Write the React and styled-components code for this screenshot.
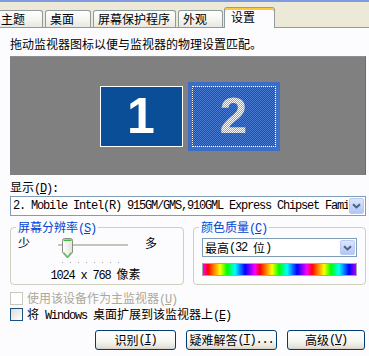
import React from "react";
import styled, { createGlobalStyle } from "styled-components";

const GlobalStyle = createGlobalStyle`
  html, body {
    margin: 0;
    width: 369px;
    height: 356px;
    overflow: hidden;
    background: #ECE9D8;
  }
  body {
    font-family: "Noto Sans CJK SC", "Liberation Sans", sans-serif;
    font-size: 12px;
    line-height: 14px;
    color: #000;
  }
`;

const Window = styled.div`
  width: 369px;
  height: 356px;
  display: flex;
  flex-direction: column;
  background: #ECE9D8;
  overflow: hidden;
`;

const TopStrip = styled.div`
  height: 2px;
  background: #7F9BE0;
`;

const TabBar = styled.div`
  height: 25px;
  display: flex;
  align-items: flex-end;
  margin-left: -4px;
  position: relative;
  z-index: 1;
`;

const Tab = styled.div`
  box-sizing: border-box;
  width: ${(p) => p.$w}px;
  height: ${(p) => (p.$active ? 21 : 17)}px;
  margin-right: ${(p) => (p.$gap === undefined ? 2 : p.$gap)}px;
  margin-bottom: ${(p) => (p.$active ? -1 : 0)}px;
  padding: ${(p) => (p.$active ? "2px 0 0 6px" : "1px 0 0 4px")};
  border: 1px solid #919B9C;
  border-bottom: none;
  border-top-color: ${(p) => (p.$active ? "#E68B2C" : "#919B9C")};
  border-radius: 3px 3px 0 0;
  background: ${(p) =>
    p.$active ? "#FCFCFE" : "linear-gradient(#FFFFFF, #F3F3EF 60%, #E8E7E0)"};
  box-shadow: ${(p) => (p.$active ? "inset 0 2px 0 #FFC73C" : "none")};
  white-space: nowrap;
`;

const Panel = styled.div`
  flex: 1;
  display: flex;
  flex-direction: column;
  background: #FCFCFE;
  border-top: 1px solid #919B9C;
  padding: 9px 3px 0 10px;
`;

const Hint = styled.div`
  line-height: 14px;
`;

const Preview = styled.div`
  box-sizing: border-box;
  margin-top: 5px;
  height: 119px;
  background: #808080;
  border-top: 1px solid #8E8E8E;
  border-right: 1px solid #6C6C6C;
  display: flex;
  align-items: center;
  justify-content: center;
  gap: 5px;
  padding-left: 4px;
`;

const Monitor = styled.div`
  box-sizing: border-box;
  width: 83px;
  height: 61px;
  border: 1px solid #FFFFFF;
  background: #0B4E98;
  color: #FFFFFF;
  font-family: "Liberation Sans", Arial, sans-serif;
  font-weight: bold;
  font-size: 50px;
  line-height: 1;
  display: grid;
  place-items: center;
`;

const SelectedMonitor = styled.div`
  box-sizing: border-box;
  width: 92px;
  height: 69px;
  border: 4px solid #3D6DC5;
  background: #3D6DC5;
`;

const DotFrame = styled.div`
  box-sizing: border-box;
  width: 100%;
  height: 100%;
  border: 1px dotted #FFFFFF;
  background: repeating-conic-gradient(#1452AA 0% 25%, #4A7CD2 0% 50%) 0 0 / 2px 2px;
  display: grid;
  place-items: center;
`;

const DitherDigit = styled.span`
  font-family: "Liberation Sans", Arial, sans-serif;
  font-weight: bold;
  font-size: 50px;
  line-height: 1;
  color: transparent;
  background: repeating-conic-gradient(#FFFFFF 0% 25%, #7FA2E0 0% 50%) 0 0 / 2px 2px;
  -webkit-background-clip: text;
  background-clip: text;
`;

const Label = styled.div`
  margin-top: 5px;
  line-height: 14px;
`;

const Lat = styled.span`
  display: inline-block;
  font-family: "Liberation Mono", "DejaVu Sans Mono", monospace;
  font-size: 12px;
  line-height: 10px;
  letter-spacing: -1.2px;
  white-space: pre;
  vertical-align: 0.5px;
`;

const Combo = styled.div`
  box-sizing: border-box;
  display: flex;
  align-items: stretch;
  height: ${(p) => p.$h}px;
  width: ${(p) => (p.$w ? `${p.$w}px` : "auto")};
  margin-top: ${(p) => p.$mt || 0}px;
  margin-left: ${(p) => p.$ml || 0}px;
  border: 1px solid #7F9DB9;
  background: #FFFFFF;
`;

const ComboText = styled.div`
  flex: 1;
  min-width: 0;
  overflow: hidden;
  white-space: nowrap;
  padding-left: ${(p) => p.$pl}px;
  display: flex;
  align-items: center;
`;

const DropButton = styled.div`
  box-sizing: border-box;
  width: 15px;
  margin: 1px;
  border: 1px solid #B9CBF3;
  border-radius: 2px;
  background: linear-gradient(#DCE6FD, #C2D3FA 55%, #B2C7F6);
  display: grid;
  place-items: center;
`;

const Groups = styled.div`
  margin-top: 4px;
  display: grid;
  grid-template-columns: 174px 173px;
  gap: 9px;
`;

const GroupBox = styled.fieldset`
  box-sizing: border-box;
  height: 65px;
  margin: 0;
  min-width: 0;
  padding: 0 8px 0 5px;
  border: 1px solid #D0D0BF;
  border-radius: 4px;
`;

const Legend = styled.legend`
  padding: 0 2px;
  color: #0046D5;
  line-height: 14px;
`;

const SliderRow = styled.div`
  display: flex;
  align-items: flex-start;
  margin: 2px 0 0 2px;
  line-height: 14px;
`;

const SliderArea = styled.div`
  width: 70px;
  margin: 0 17px 0 28px;
  display: flex;
  flex-direction: column;
`;

const TrackBox = styled.div`
  position: relative;
  height: 23px;
`;

const Track = styled.div`
  position: absolute;
  left: 0;
  right: 0;
  top: 8px;
  height: 2px;
  background: #C5C5BE;
  border-bottom: 1px solid #FFFFFF;
`;

const Thumb = styled.svg`
  position: absolute;
  left: 4px;
  top: 2px;
`;

const Ticks = styled.div`
  margin: 3px 0 0 4px;
  width: 64px;
  height: 1px;
  background: repeating-linear-gradient(to right, #A3A3A3 0 1px, transparent 1px 8px);
`;

const ResText = styled.div`
  margin-top: 4px;
  text-align: center;
  line-height: 14px;
`;

const Spectrum = styled.div`
  box-sizing: border-box;
  margin: 6px 0 0 3px;
  width: 155px;
  height: 13px;
  border: 1px solid #A7A6AA;
  background: repeating-linear-gradient(
    to right,
    #FF00FF 0px,
    #FF0000 5px,
    #FF8000 11px,
    #FFFF00 17px,
    #00FF00 24px,
    #00FFFF 32px,
    #0080FF 37px,
    #0000FF 42px,
    #8000FF 47px,
    #FF00FF 52px
  );
`;

const Checks = styled.div`
  margin-top: 5px;
  display: flex;
  flex-direction: column;
`;

const CheckRow = styled.div`
  height: 16px;
  display: flex;
  align-items: center;
  gap: 4px;
  line-height: 14px;
  color: ${(p) => (p.$disabled ? "#ACA899" : "#000")};
`;

const CheckText = styled.span`
  display: inline-block;
  height: 14px;
  line-height: 14px;
  white-space: nowrap;
`;

const CheckBox = styled.span`
  box-sizing: border-box;
  width: 13px;
  height: 13px;
  border: 1px solid ${(p) => (p.$disabled ? "#CAC8BB" : "#1C5180")};
  background: ${(p) =>
    p.$disabled ? "#FFFFFF" : "linear-gradient(135deg, #DCDCD7, #FFFFFF)"};
`;

const ButtonRow = styled.div`
  margin-top: 8px;
  display: flex;
  justify-content: flex-end;
  gap: 10px;
  padding-right: 1px;
`;

const XPButton = styled.div`
  box-sizing: border-box;
  width: ${(p) => p.$w}px;
  height: 20px;
  border: 1px solid #003C74;
  border-radius: 3px;
  background: linear-gradient(#FFFFFF, #F4F4F0 60%, #E3E1D8 90%, #D6D0C5);
  display: flex;
  align-items: center;
  justify-content: center;
  white-space: nowrap;
`;

const Key = ({ k }) => (
  <Lat>
    (<u>{k}</u>)
  </Lat>
);

const Chevron = () => (
  <svg width="9" height="6" viewBox="0 0 9 6">
    <path d="M1 1.2 L4.5 4.5 L8 1.2" fill="none" stroke="#4D6185" strokeWidth="2" />
  </svg>
);

const SliderThumb = () => (
  <Thumb width="11" height="21" viewBox="0 0 11 21">
    <defs>
      <linearGradient id="tb" x1="0" y1="0" x2="1" y2="0">
        <stop offset="0" stopColor="#FFFFFF" />
        <stop offset="1" stopColor="#E3E3DB" />
      </linearGradient>
    </defs>
    <path
      d="M0.5 2.5 Q0.5 0.5 2.5 0.5 H8.5 Q10.5 0.5 10.5 2.5 V14.5 L5.5 20 L0.5 14.5 Z"
      fill="url(#tb)"
      stroke="#8A8A84"
    />
    <path d="M1.5 1.5 H9.5 V3 H1.5 Z" fill="#3CB93C" />
    <path d="M1.5 14.5 L5.5 19 L9.5 14.5" fill="none" stroke="#5CC15C" strokeWidth="1.2" />
  </Thumb>
);

const tabs = [
  { label: "主题", w: 47 },
  { label: "桌面", w: 46 },
  { label: "屏幕保护程序", w: 83 },
  { label: "外观", w: 45, gap: 1 },
  { label: "设置", w: 51, active: true },
];

export default function App() {
  return (
    <Window>
      <GlobalStyle />
      <TopStrip />
      <TabBar>
        {tabs.map((t) => (
          <Tab key={t.label} $w={t.w} $gap={t.gap} $active={t.active}>
            {t.label}
          </Tab>
        ))}
      </TabBar>
      <Panel>
        <Hint>拖动监视器图标以便与监视器的物理设置匹配。</Hint>
        <Preview>
          <Monitor>1</Monitor>
          <SelectedMonitor>
            <DotFrame>
              <DitherDigit>2</DitherDigit>
            </DotFrame>
          </SelectedMonitor>
        </Preview>
        <Label>
          显示<Key k="D" />
          <Lat>:</Lat>
        </Label>
        <Combo $h={20} $mt={2}>
          <ComboText $pl={2}>
            <Lat>2. Mobile Intel(R) 915GM/GMS,910GML Express Chipset Fami</Lat>
          </ComboText>
          <DropButton>
            <Chevron />
          </DropButton>
        </Combo>
        <Groups>
          <GroupBox>
            <Legend>
              屏幕分辨率<Key k="S" />
            </Legend>
            <SliderRow>
              <span>少</span>
              <SliderArea>
                <TrackBox>
                  <Track />
                  <SliderThumb />
                </TrackBox>
                <Ticks />
              </SliderArea>
              <span>多</span>
            </SliderRow>
            <ResText>
              <Lat>{"1024 x 768 "}</Lat>像素
            </ResText>
          </GroupBox>
          <GroupBox>
            <Legend>
              颜色质量<Key k="C" />
            </Legend>
            <Combo $h={19} $w={155} $mt={4} $ml={3}>
              <ComboText $pl={2}>
                最高<Lat>{"(32 "}</Lat>位<Lat>)</Lat>
              </ComboText>
              <DropButton>
                <Chevron />
              </DropButton>
            </Combo>
            <Spectrum />
          </GroupBox>
        </Groups>
        <Checks>
          <CheckRow $disabled>
            <CheckBox $disabled />
            <CheckText>
              使用该设备作为主监视器<Key k="U" />
            </CheckText>
          </CheckRow>
          <CheckRow>
            <CheckBox />
            <CheckText>
              将<Lat>{" Windows "}</Lat>桌面扩展到该监视器上<Key k="E" />
            </CheckText>
          </CheckRow>
        </Checks>
        <ButtonRow>
          <XPButton $w={81}>
            识别<Key k="I" />
          </XPButton>
          <XPButton $w={91}>
            疑难解答<Key k="T" />
            <Lat>...</Lat>
          </XPButton>
          <XPButton $w={78}>
            高级<Key k="V" />
          </XPButton>
        </ButtonRow>
      </Panel>
    </Window>
  );
}
